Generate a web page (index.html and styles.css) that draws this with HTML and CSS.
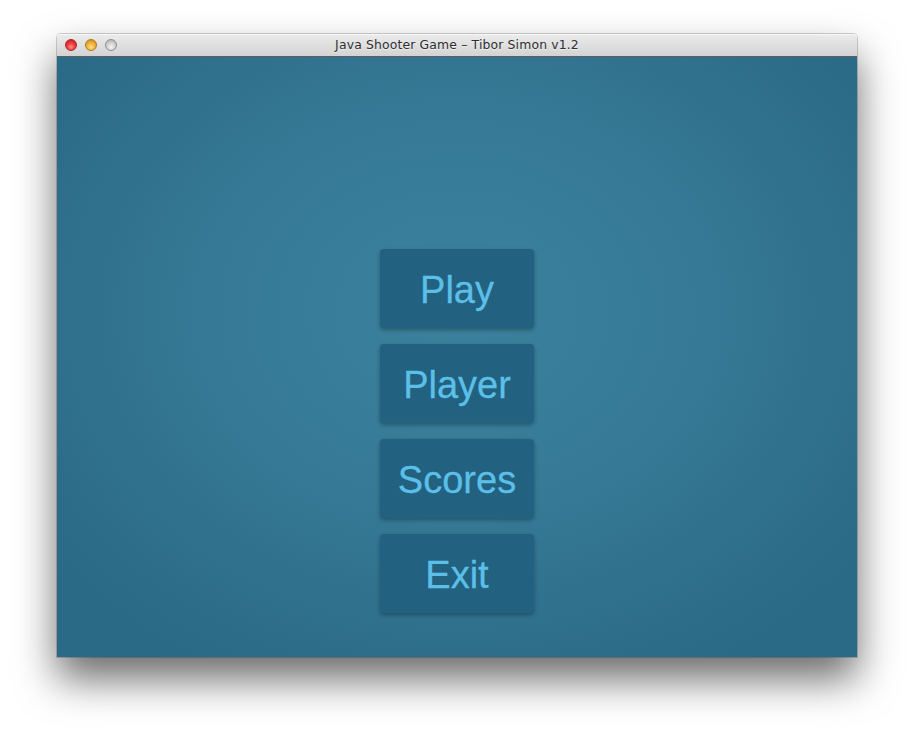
FILE: index.html
```html
<!DOCTYPE html>
<html>
<head>
<meta charset="utf-8">
<link rel="stylesheet" href="styles.css">
</head>
<body>
<div class="window">
  <div class="titlebar">
    <div class="lights">
      <span class="light red"></span>
      <span class="light yellow"></span>
      <span class="light gray"></span>
    </div>
    <div class="title">Java Shooter Game – Tibor Simon v1.2</div>
  </div>
  <div class="content">
    <div class="btn">Play</div>
    <div class="btn">Player</div>
    <div class="btn">Scores</div>
    <div class="btn">Exit</div>
  </div>
</div>
</body>
</html>
```

FILE: styles.css
```css
html, body {
  margin: 0;
  padding: 0;
  background: #ffffff;
}
body {
  width: 914px;
  height: 736px;
  overflow: hidden;
  padding-top: 34px;
  padding-left: 57px;
  box-sizing: border-box;
}
.window {
  width: 800px;
  border-radius: 4px 4px 0 0;
  box-shadow: 0 22px 40px rgba(0,0,0,0.58), 0 0 0 1px rgba(0,0,0,0.18);
}
.titlebar {
  position: relative;
  height: 22px;
  border-radius: 4px 4px 0 0;
  background: linear-gradient(#ececec, #d3d3d3);
  border-bottom: 1px solid #5e5e5e;
  box-shadow: inset 0 1px 0 #f8f8f8;
  display: flex;
  align-items: center;
  justify-content: center;
}
.lights {
  position: absolute;
  left: 8px;
  top: 5px;
  display: flex;
  gap: 8px;
}
.light {
  width: 12px;
  height: 12px;
  border-radius: 50%;
  box-sizing: border-box;
}
.red {
  background: radial-gradient(circle at 50% 70%, #ff8a8a 0%, #f03c3c 45%, #c01818 100%);
  border: 1px solid #a8262b;
}
.yellow {
  background: radial-gradient(circle at 50% 70%, #ffe08a 0%, #f4b23a 45%, #c98412 100%);
  border: 1px solid #a87a25;
}
.gray {
  background: radial-gradient(circle at 50% 70%, #f4f4f4 0%, #d0d0d0 50%, #a8a8a8 100%);
  border: 1px solid #8e8e8e;
}
.title {
  font-family: "DejaVu Sans", "Liberation Sans", sans-serif;
  font-size: 12.4px;
  color: #2e2e2e;
  letter-spacing: 0.15px;
  margin-top: -1px;
  text-shadow: 0 1px 0 rgba(255,255,255,0.6);
}
.content {
  height: 600px;
  box-sizing: border-box;
  padding-top: 192px;
  display: flex;
  flex-direction: column;
  align-items: center;
  gap: 16px;
  background: radial-gradient(ellipse 520px 420px at 400px 255px, #3b819e 0%, #367a97 45%, #2d6d89 85%, #2b6a86 100%);
}
.btn {
  width: 154px;
  height: 79px;
  border-radius: 4px;
  background: #22617f;
  box-shadow: 0 2px 4px rgba(0,0,0,0.3);
  display: flex;
  align-items: center;
  justify-content: center;
  font-family: "Liberation Sans", Arial, sans-serif;
  font-size: 38px;
  color: #5cbfe8;
  padding-top: 3px;
  box-sizing: border-box;
  -webkit-text-stroke: 0.3px #5cbfe8;
}
```
